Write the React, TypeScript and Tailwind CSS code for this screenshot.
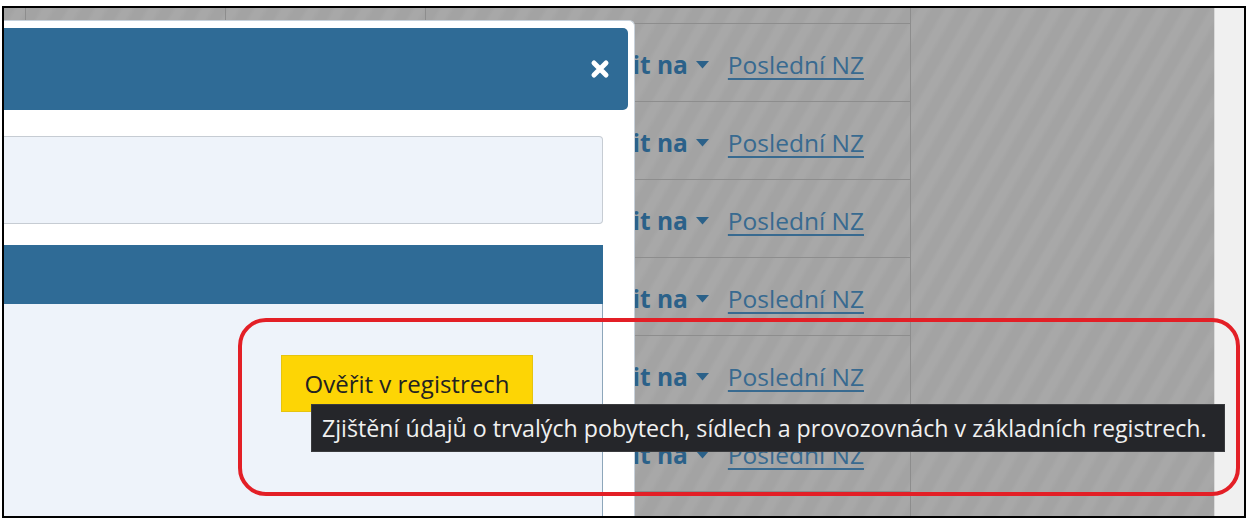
import React from 'react';

const FONT = "font-['Open_Sans',sans-serif]";
const STRIPES =
  'bg-[repeating-linear-gradient(120deg,#a3a3a3_0px,#a3a3a3_8px,#a8a8a8_12px,#a8a8a8_18px,#a3a3a3_23px)]';

const TableRow: React.FC<{ height: string; content?: boolean }> = ({ height, content }) => (
  <div className={`flex shrink-0 ${height} border-b border-[#8d8d8d]`}>
    <div className="w-[22px] border-r border-[#8d8d8d]" />
    <div className="w-[200px] border-r border-[#8d8d8d]" />
    <div className="w-[200px] border-r border-[#8d8d8d]" />
    <div className="flex-1 border-r border-[#8d8d8d] flex items-center justify-end pr-[46px] pt-[5px]">
      {content && (
        <div className="flex items-center text-[24.5px] leading-none">
          <span className="font-bold text-[#2b6189]">Zobrazit na</span>
          <svg width="13" height="8" viewBox="0 0 13 8" className="ml-[8px]">
            <path d="M0 0h13L6.5 7.5z" fill="#2b6189" />
          </svg>
          <span className="ml-[19px] text-[#386a90] underline underline-offset-[4px] decoration-[1.5px]">
            Poslední NZ
          </span>
        </div>
      )}
    </div>
  </div>
);

const CloseIcon: React.FC = () => (
  <svg width="20" height="20" viewBox="0 0 20 20">
    <path d="M4 4L16 16M16 4L4 16" stroke="white" strokeWidth="5" strokeLinecap="round" />
  </svg>
);

export default function App() {
  return (
    <div className={`w-[1250px] h-[520px] bg-white pt-[6px] pl-[2px] ${FONT}`}>
      <div className="relative w-[1244px] h-[512px] border-2 border-black overflow-hidden">
        {/* backdrop with the page table behind */}
        <div className="flex h-full">
          <div className={`flex-1 flex ${STRIPES}`}>
            <div className="w-[907px] flex flex-col">
              <TableRow height="h-[16px]" />
              <TableRow height="h-[78px]" content />
              <TableRow height="h-[78px]" content />
              <TableRow height="h-[78px]" content />
              <TableRow height="h-[78px]" content />
              <TableRow height="h-[78px]" content />
              <TableRow height="h-[78px]" content />
              <TableRow height="h-[78px]" />
            </div>
            <div className="flex-1" />
          </div>
          <div className="w-[30px] bg-[#f0f0f0] border-l border-[#d9d9d9]" />
        </div>

        {/* modal */}
        <div className="absolute left-0 top-[12px] w-[631px] h-[520px] bg-white rounded-tr-[6px] border-t border-r border-[#c8d1da] pt-[7px] pr-[6px] flex flex-col">
          <div className="h-[82px] bg-[#2f6b96] rounded-r-[5px] flex items-center justify-end pr-[18px]">
            <CloseIcon />
          </div>
          <div className="flex-1 flex flex-col pr-[25px] pt-[26px]">
            <div className="h-[88px] bg-[#eef3fa] border border-l-0 border-[#c6ccd3] rounded-r-[4px]" />
            <div className="mt-[21px] h-[59px] bg-[#2f6b96]" />
            <div className="flex-1 bg-[#eef3fa] border-r border-[#8da6ba]">
              <div className="ml-[277px] mt-[51px] w-[252px] h-[57px] bg-[#fdd505] border border-[#e6c40e] flex items-center justify-center text-[24px] text-[#222]">
                Ověřit v registrech
              </div>
            </div>
          </div>
        </div>

        {/* tooltip */}
        <div className="absolute left-[307px] top-[396px] w-[914px] h-[48px] bg-[#25262a] border border-[#3a3b3e] flex items-center pl-[10px] text-[23.2px] text-[#f0f0f0] whitespace-nowrap">
          Zjištění údajů o trvalých pobytech, sídlech a provozovnách v základních registrech.
        </div>

        {/* annotation */}
        <div className="absolute left-[234px] top-[310px] w-[1002px] h-[178px] border-[4px] border-[#e31f26] rounded-[28px]" />
      </div>
    </div>
  );
}
